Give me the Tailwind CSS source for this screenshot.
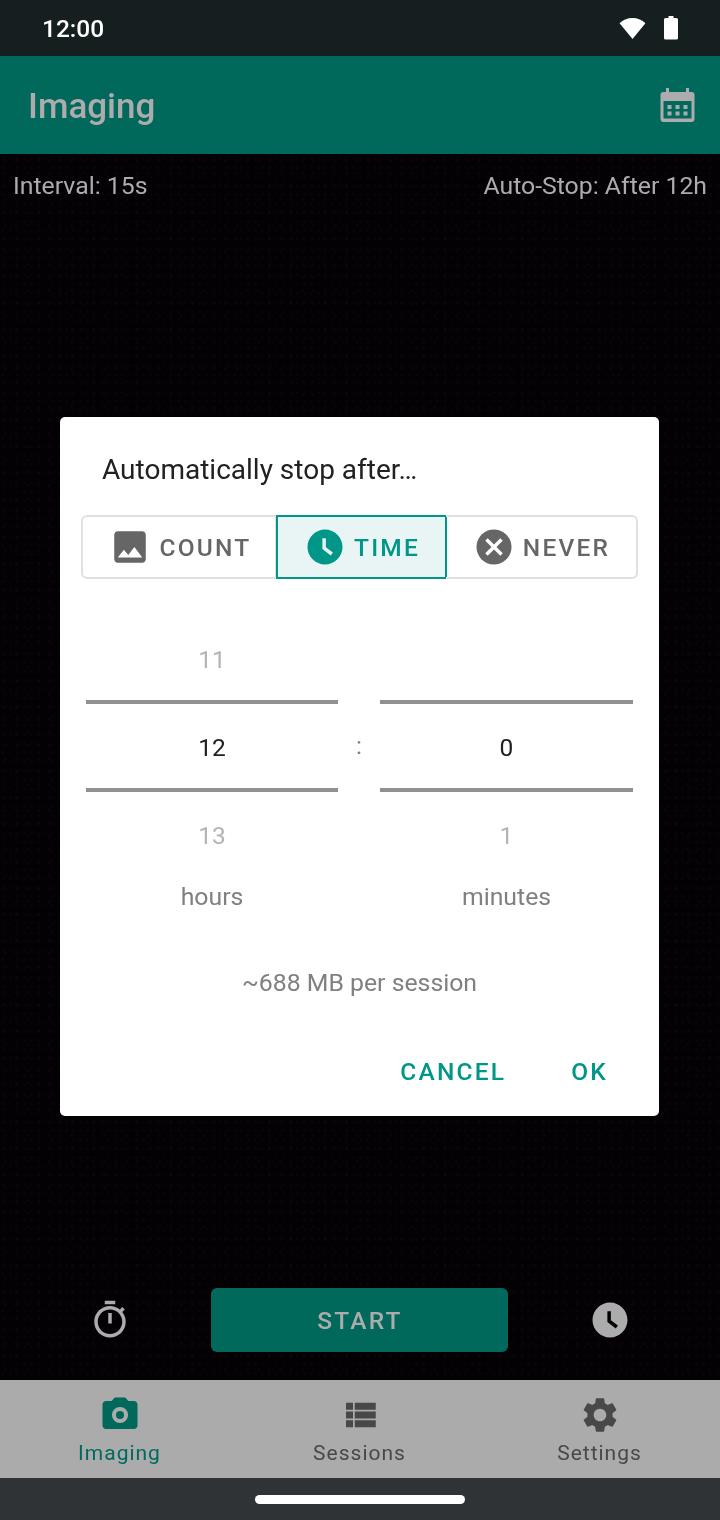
<!DOCTYPE html>
<html lang="en">
<head>
    <meta charset="UTF-8">
    <meta name="viewport" content="width=device-width, initial-scale=1.0">
    <title>Imaging</title>
    <script src="https://cdn.jsdelivr.net/npm/@tailwindcss/browser@4"></script>
</head>
<body class="bg-black font-['Roboto',sans-serif]">
    <div class="relative w-[720px] h-[1520px] flex flex-col overflow-hidden will-change-transform">
        <!-- Status bar -->
        <div class="h-[56px] bg-[#151f1f] flex items-center justify-between pl-[42px] pr-[42px] text-white">
            <span class="text-[24.5px] leading-none font-medium pt-[2px]">12:00</span>
            <div class="flex items-center gap-[18px]">
                <svg class="w-[27px] h-[23px]" viewBox="0 0 28 24" fill="currentColor"><path d="M14 23 L0.5 6.5 C4 3 8.5 1 14 1 C19.5 1 24 3 27.5 6.5 Z"/></svg>
                <svg class="w-[14px] h-[24px]" viewBox="0 0 14 24" fill="currentColor"><path d="M4.500 0h5v2h3a1.500 1.500 0 0 1 1.500 1.500V22a1.500 1.500 0 0 1-1.500 1.500h-11A1.500 1.500 0 0 1 0 22V3.500A1.500 1.500 0 0 1 1.500 2h3z"/></svg>
            </div>
        </div>

        <!-- App bar -->
        <div class="h-[98px] bg-[#00695c] flex items-center justify-between pl-[28px] pr-[25px] text-[#acacac]">
            <span class="text-[35px] leading-none font-medium pt-[2px]">Imaging</span>
            <svg class="w-[35px] h-[36px]" viewBox="0 0 35 36" fill="currentColor">
                <path fill-rule="evenodd" d="M6 1h3v4h17V1h3v4h2.500a3 3 0 0 1 3 3v24a3 3 0 0 1-3 3h-28a3 3 0 0 1-3-3V8a3 3 0 0 1 3-3H6zM3.500 14v17.500h28V14zM7.500 18v4h4v-4zM15.500 18v4h4v-4zM23.500 18v4h4v-4zM7.500 24.500v4h4v-4zM15.500 24.500v4h4v-4zM23.500 24.500v4h4v-4z"/>
            </svg>
        </div>

        <!-- Camera preview -->
        <div class="flex-1 bg-[#030103] bg-[radial-gradient(rgba(70,10,35,0.16)_1px,transparent_1.5px),radial-gradient(rgba(35,15,45,0.16)_1px,transparent_1.5px)] bg-[size:11px_13px,7px_9px] flex flex-col justify-between text-[#acacac]">
            <div class="flex justify-between px-[13px] pt-[17px] text-[24.8px] leading-[29px]">
                <span>Interval: 15s</span>
                <span>Auto-Stop: After 12h</span>
            </div>
            <div class="flex items-center justify-between pb-[28px] pl-[89px] pr-[89px]">
                <svg class="w-[42px] h-[42px]" viewBox="0 0 24 24" fill="currentColor"><path d="M15 1H9v2h6V1zm-4 13h2V8h-2v6zm8.030-6.610l1.420-1.420c-.430-.510-.900-.990-1.410-1.410l-1.420 1.420C16.070 4.740 14.120 4 12 4c-4.970 0-9 4.030-9 9s4.020 9 9 9 9-4.030 9-9c0-2.120-.740-4.070-1.970-5.610zM12 20c-3.870 0-7-3.130-7-7s3.130-7 7-7 7 3.130 7 7-3.130 7-7 7z"/></svg>
                <div class="w-[297px] h-[64px] mr-[2px] pt-[2px] pl-[2px] rounded-[6px] bg-[#00695c] flex items-center justify-center text-[24.5px] font-medium tracking-[2.2px]">START</div>
                <svg class="w-[42px] h-[42px]" viewBox="0 0 24 24" fill="currentColor"><path fill-rule="evenodd" d="M12 2C6.500 2 2 6.500 2 12s4.500 10 10 10 10-4.500 10-10S17.500 2 12 2zM10.500 7h2v5.200l4 3-1.200 1.600-4.800-3.600z"/></svg>
            </div>
        </div>

        <!-- Bottom navigation -->
        <div class="h-[98px] bg-[#ababab] grid grid-cols-3 text-[#484848] text-[21px] leading-[26px] tracking-[1px]">
            <div class="flex flex-col items-center pt-[14px] text-[#00695c]">
                <svg class="w-[42px] h-[42px]" viewBox="0 0 24 24" fill="currentColor"><path fill-rule="evenodd" d="M9 2L7.170 4H4c-1.100 0-2 .9-2 2v12c0 1.100.9 2 2 2h16c1.100 0 2-.9 2-2V6c0-1.100-.9-2-2-2h-3.170L15 2H9zm3 5.400a4.600 4.600 0 1 1 0 9.200 4.600 4.600 0 0 1 0-9.200z"/><circle cx="12" cy="12" r="2.300"/></svg>
                <span class="mt-[4px] mr-[1px]">Imaging</span>
            </div>
            <div class="flex flex-col items-center pt-[14px]">
                <svg class="w-[42px] h-[42px]" viewBox="0 0 24 24" fill="currentColor"><path d="M4 14h4v-4H4v4zm0 5h4v-4H4v4zM4 9h4V5H4v4zm5 5h12v-4H9v4zm0 5h12v-4H9v4zM9 5v4h12V5H9z"/></svg>
                <span class="mt-[4px] mr-[1px]">Sessions</span>
            </div>
            <div class="flex flex-col items-center pt-[14px]">
                <svg class="w-[42px] h-[42px]" viewBox="0 0 24 24" fill="currentColor"><path d="M19.140 12.940c.04-.3.06-.61.06-.94 0-.32-.02-.64-.07-.94l2.030-1.580c.18-.14.23-.41.12-.61l-1.920-3.320c-.12-.22-.37-.29-.59-.22l-2.390.96c-.5-.38-1.030-.7-1.620-.94l-.36-2.540c-.04-.24-.24-.41-.48-.41h-3.840c-.24 0-.43.17-.47.41l-.36 2.540c-.59.24-1.130.57-1.620.94l-2.390-.96c-.22-.08-.47 0-.59.22L2.740 8.870c-.12.21-.08.47.12.61l2.030 1.580c-.05.3-.09.63-.09.94s.02.64.07.94l-2.030 1.580c-.18.14-.23.41-.12.61l1.920 3.320c.12.22.37.29.59.22l2.390-.96c.5.38 1.030.7 1.620.94l.36 2.540c.05.24.24.41.48.41h3.840c.24 0 .44-.17.47-.41l.36-2.540c.59-.24 1.130-.56 1.620-.94l2.390.96c.22.08.47 0 .59-.22l1.920-3.320c.12-.22.07-.47-.12-.61l-2.010-1.580zM12 15.600c-1.980 0-3.600-1.620-3.600-3.600s1.620-3.600 3.600-3.600 3.600 1.620 3.600 3.600-1.620 3.600-3.600 3.600z"/></svg>
                <span class="mt-[4px] mr-[1px]">Settings</span>
            </div>
        </div>

        <!-- Gesture bar -->
        <div class="h-[42px] bg-[#2f3336] flex items-center justify-center">
            <div class="w-[210px] h-[9px] rounded-full bg-white"></div>
        </div>

        <!-- Dialog -->
        <div class="absolute left-[60px] top-[417px] w-[599px] h-[699px] rounded-[5px] bg-white flex flex-col">
            <div class="pl-[42px] pt-[36px] text-[28px] leading-[33px] text-[#212121]">Automatically stop after…</div>

            <!-- Toggle group -->
            <div class="mt-[29px] mx-[21px] h-[64px] flex text-[24.5px] font-medium tracking-[2.2px] text-[#666666]">
                <div class="w-[196px] pl-[2px] border-2 border-[#e0e0e0] rounded-l-[6px] flex items-center justify-center gap-[9px]">
                    <svg class="w-[42px] h-[42px]" viewBox="0 0 24 24" fill="currentColor"><path d="M21 19V5c0-1.100-.9-2-2-2H5c-1.100 0-2 .9-2 2v14c0 1.100.9 2 2 2h14c1.100 0 2-.9 2-2zM8.500 13.500l2.500 3.010L14.500 12l4.500 6H5l3.500-4.500z"/></svg>
                    <span class="pt-[2px]">COUNT</span>
                </div>
                <div class="w-[171px] pl-[1px] -ml-[1px] border-2 border-[#009688] bg-[#e8f5f4] text-[#009688] flex items-center justify-center gap-[8px]">
                    <svg class="w-[42px] h-[42px]" viewBox="0 0 24 24" fill="currentColor"><path fill-rule="evenodd" d="M12 2C6.500 2 2 6.500 2 12s4.500 10 10 10 10-4.500 10-10S17.500 2 12 2zM10.500 7h2v5.200l4 3-1.200 1.600-4.800-3.600z"/></svg>
                    <span class="pt-[2px]">TIME</span>
                </div>
                <div class="w-[192px] pl-[1px] -ml-[1px] border-y-2 border-r-2 border-[#e0e0e0] rounded-r-[6px] flex items-center justify-center gap-[8px]">
                    <svg class="w-[42px] h-[42px]" viewBox="0 0 24 24" fill="currentColor"><path d="M12 2C6.470 2 2 6.470 2 12s4.470 10 10 10 10-4.470 10-10S17.530 2 12 2zm5 13.590L15.590 17 12 13.410 8.410 17 7 15.590 10.590 12 7 8.410 8.410 7 12 10.590 15.590 7 17 8.410 13.410 12 17 15.590z"/></svg>
                    <span class="pt-[2px]">NEVER</span>
                </div>
            </div>

            <!-- Number pickers -->
            <div class="mt-[36px] pl-[26px] flex items-start">
                <div class="w-[252px] flex flex-col items-center">
                    <div class="h-[85px] pt-[6px] w-full flex items-center justify-center text-[24.5px] text-[#b4b4b4]">11</div>
                    <div class="h-[92px] pt-[5px] w-full border-y-4 border-[#909090] flex items-center justify-center text-[24.5px] text-[#212121]">12</div>
                    <div class="h-[85px] pt-[4px] w-full flex items-center justify-center text-[24.5px] text-[#b4b4b4]">13</div>
                    <div class="text-[24.8px] leading-[29px] text-[#808080] mt-[5px]">hours</div>
                </div>
                <div class="w-[42px] h-[262px] flex items-center justify-center text-[24.5px] text-[#808080]">:</div>
                <div class="w-[253px] flex flex-col items-center">
                    <div class="h-[85px] w-full"></div>
                    <div class="h-[92px] pt-[5px] w-full border-y-4 border-[#909090] flex items-center justify-center text-[24.5px] text-[#212121]">0</div>
                    <div class="h-[85px] pt-[4px] w-full flex items-center justify-center text-[24.5px] text-[#b4b4b4]">1</div>
                    <div class="text-[24.8px] leading-[29px] text-[#808080] mt-[5px]">minutes</div>
                </div>
            </div>

            <div class="mt-[57px] text-center text-[24.8px] leading-[29px] text-[#808080]">~688 MB per session</div>

            <!-- Actions -->
            <div class="mt-[60px] pr-[51px] flex justify-end gap-[65px] text-[24.5px] leading-[29px] font-medium tracking-[2.2px] text-[#009688]">
                <span>CANCEL</span>
                <span>OK</span>
            </div>
        </div>
    </div>
</body>
</html>
